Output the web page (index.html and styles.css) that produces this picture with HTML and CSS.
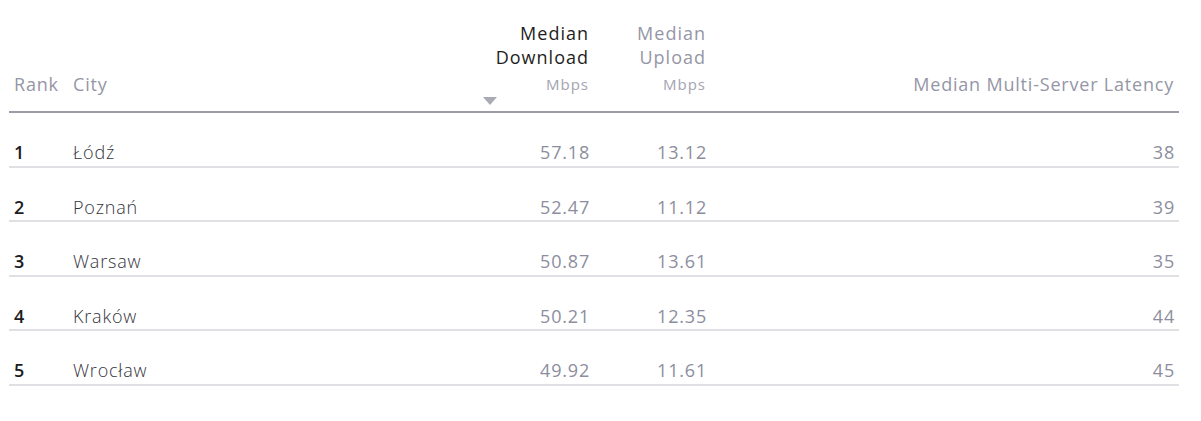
FILE: index.html
```html
<!DOCTYPE html>
<html lang="en">
<head>
<meta charset="utf-8">
<title>Median speeds by city</title>
<link rel="stylesheet" href="styles.css">
</head>
<body>
<table class="speed-table">
  <colgroup>
    <col class="col-rank">
    <col class="col-city">
    <col class="col-down">
    <col class="col-up">
    <col class="col-lat">
  </colgroup>
  <thead>
    <tr>
      <th class="h-left">Rank</th>
      <th class="h-left">City</th>
      <th class="h-num sorted">
        <div class="h-title">Median<br>Download</div>
        <div class="h-unit">Mbps</div>
        <span class="sort-arrow"></span>
      </th>
      <th class="h-num">
        <div class="h-title">Median<br>Upload</div>
        <div class="h-unit">Mbps</div>
      </th>
      <th class="h-num h-lat">Median Multi-Server Latency</th>
    </tr>
  </thead>
  <tbody>
    <tr><td class="rank">1</td><td class="city">Łódź</td><td class="num">57.18</td><td class="num">13.12</td><td class="num">38</td></tr>
    <tr><td class="rank">2</td><td class="city">Poznań</td><td class="num">52.47</td><td class="num">11.12</td><td class="num">39</td></tr>
    <tr><td class="rank">3</td><td class="city">Warsaw</td><td class="num">50.87</td><td class="num">13.61</td><td class="num">35</td></tr>
    <tr><td class="rank">4</td><td class="city">Kraków</td><td class="num">50.21</td><td class="num">12.35</td><td class="num">44</td></tr>
    <tr><td class="rank">5</td><td class="city">Wrocław</td><td class="num">49.92</td><td class="num">11.61</td><td class="num">45</td></tr>
  </tbody>
</table>
</body>
</html>
```
FILE: styles.css
```css
html, body {
  margin: 0;
  padding: 0;
  background: #ffffff;
}

body {
  font-family: "Open Sans", "DejaVu Sans", sans-serif;
  color: #2a2a33;
}

.speed-table {
  margin: 21px 0 0 9px;
  width: 1170px;
  border-collapse: collapse;
  table-layout: fixed;
}

.col-rank { width: 59px; }
.col-city { width: 410px; }
.col-down { width: 116px; }
.col-up { width: 117px; }
.col-lat { width: 468px; }

.speed-table th {
  font-weight: 400;
  font-size: 18px;
  letter-spacing: 0.8px;
  color: #9596a6;
  vertical-align: bottom;
  padding: 0 5px 12px 5px;
  line-height: 30px;
  border-bottom: 2px solid #9c9ca8;
  white-space: nowrap;
}

.h-left { text-align: left; }

.h-num {
  text-align: right;
  position: relative;
  padding-right: 4px;
}

.h-title {
  line-height: 24px;
  letter-spacing: 1px;
}

.h-unit {
  font-size: 15px;
  letter-spacing: 1px;
  line-height: 30px;
  color: #a3a4b2;
}

.sorted .h-title {
  color: #1e1e22;
}

.sort-arrow {
  position: absolute;
  left: 5px;
  bottom: 6px;
  width: 0;
  height: 0;
  border-left: 7px solid transparent;
  border-right: 7px solid transparent;
  border-top: 8px solid #a9aab4;
}

.speed-table td {
  font-size: 18px;
  letter-spacing: 0.8px;
  line-height: 24px;
  padding: 27px 5px 1.5px 5px;
  border-bottom: 2px solid #e0e0e4;
  white-space: nowrap;
}

.rank {
  font-weight: 600;
  color: #1c1c22;
}

.city {
  font-weight: 300;
  color: #33333b;
}

.speed-table td.num {
  text-align: right;
  color: #8c8e9e;
  padding-right: 4px;
}
```
